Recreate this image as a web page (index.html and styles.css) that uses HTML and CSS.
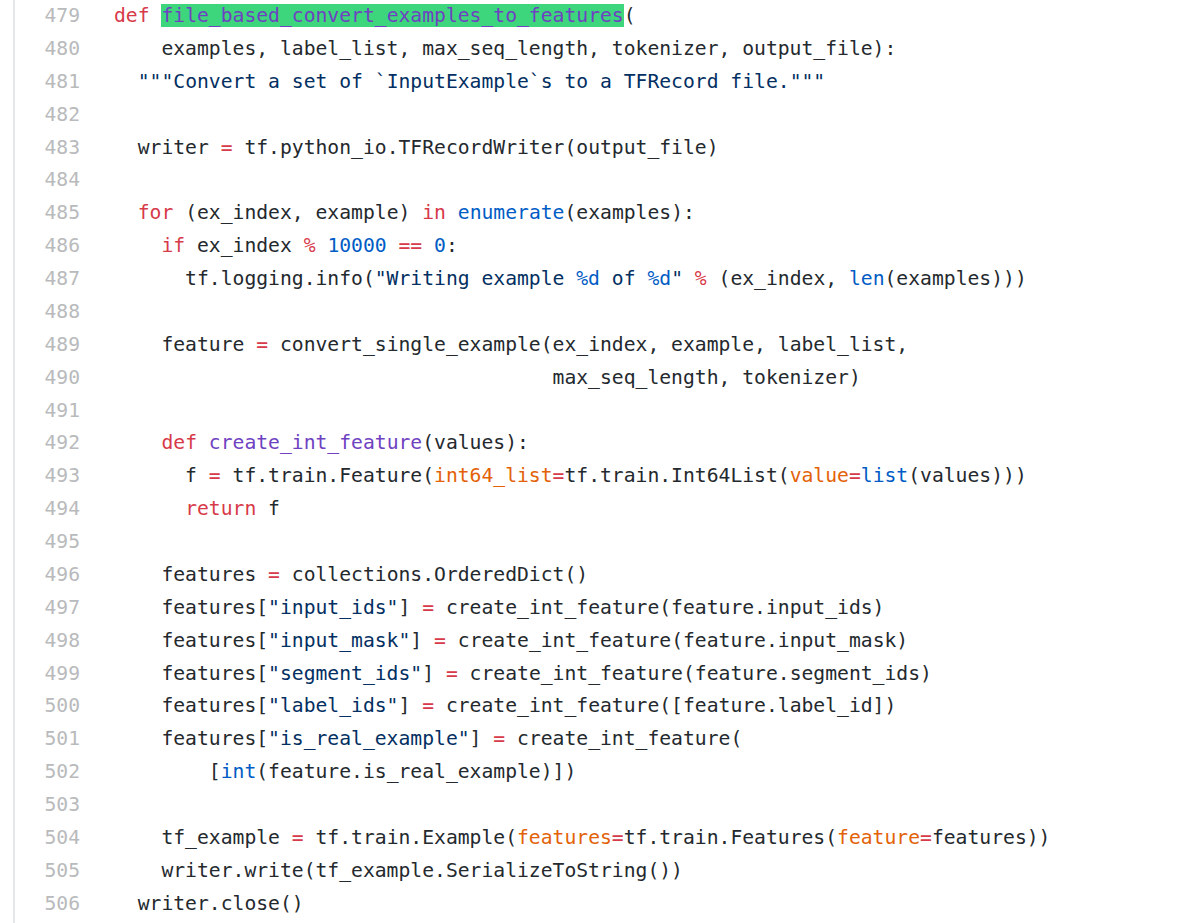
FILE: index.html
```html
<!DOCTYPE html>
<html>
<head>
<meta charset="utf-8">
<link rel="stylesheet" href="styles.css">
</head>
<body>
<div class="blob">
<div class="row"><span class="num">479</span><span class="code"><span class="k">def</span> <span class="en hl">file_based_convert_examples_to_features</span>(</span></div>
<div class="row"><span class="num">480</span><span class="code">    examples, label_list, max_seq_length, tokenizer, output_file):</span></div>
<div class="row"><span class="num">481</span><span class="code">  <span class="s">"""Convert a set of `InputExample`s to a TFRecord file."""</span></span></div>
<div class="row"><span class="num">482</span><span class="code"></span></div>
<div class="row"><span class="num">483</span><span class="code">  writer <span class="k">=</span> tf.python_io.TFRecordWriter(output_file)</span></div>
<div class="row"><span class="num">484</span><span class="code"></span></div>
<div class="row"><span class="num">485</span><span class="code">  <span class="k">for</span> (ex_index, example) <span class="k">in</span> <span class="c1">enumerate</span>(examples):</span></div>
<div class="row"><span class="num">486</span><span class="code">    <span class="k">if</span> ex_index <span class="k">%</span> <span class="c1">10000</span> <span class="k">==</span> <span class="c1">0</span>:</span></div>
<div class="row"><span class="num">487</span><span class="code">      tf.logging.info(<span class="s">"Writing example <span class="c1">%d</span> of <span class="c1">%d</span>"</span> <span class="k">%</span> (ex_index, <span class="c1">len</span>(examples)))</span></div>
<div class="row"><span class="num">488</span><span class="code"></span></div>
<div class="row"><span class="num">489</span><span class="code">    feature <span class="k">=</span> convert_single_example(ex_index, example, label_list,</span></div>
<div class="row"><span class="num">490</span><span class="code">                                     max_seq_length, tokenizer)</span></div>
<div class="row"><span class="num">491</span><span class="code"></span></div>
<div class="row"><span class="num">492</span><span class="code">    <span class="k">def</span> <span class="en">create_int_feature</span>(values):</span></div>
<div class="row"><span class="num">493</span><span class="code">      f <span class="k">=</span> tf.train.Feature(<span class="v">int64_list</span><span class="k">=</span>tf.train.Int64List(<span class="v">value</span><span class="k">=</span><span class="c1">list</span>(values)))</span></div>
<div class="row"><span class="num">494</span><span class="code">      <span class="k">return</span> f</span></div>
<div class="row"><span class="num">495</span><span class="code"></span></div>
<div class="row"><span class="num">496</span><span class="code">    features <span class="k">=</span> collections.OrderedDict()</span></div>
<div class="row"><span class="num">497</span><span class="code">    features[<span class="s">"input_ids"</span>] <span class="k">=</span> create_int_feature(feature.input_ids)</span></div>
<div class="row"><span class="num">498</span><span class="code">    features[<span class="s">"input_mask"</span>] <span class="k">=</span> create_int_feature(feature.input_mask)</span></div>
<div class="row"><span class="num">499</span><span class="code">    features[<span class="s">"segment_ids"</span>] <span class="k">=</span> create_int_feature(feature.segment_ids)</span></div>
<div class="row"><span class="num">500</span><span class="code">    features[<span class="s">"label_ids"</span>] <span class="k">=</span> create_int_feature([feature.label_id])</span></div>
<div class="row"><span class="num">501</span><span class="code">    features[<span class="s">"is_real_example"</span>] <span class="k">=</span> create_int_feature(</span></div>
<div class="row"><span class="num">502</span><span class="code">        [<span class="c1">int</span>(feature.is_real_example)])</span></div>
<div class="row"><span class="num">503</span><span class="code"></span></div>
<div class="row"><span class="num">504</span><span class="code">    tf_example <span class="k">=</span> tf.train.Example(<span class="v">features</span><span class="k">=</span>tf.train.Features(<span class="v">feature</span><span class="k">=</span>features))</span></div>
<div class="row"><span class="num">505</span><span class="code">    writer.write(tf_example.SerializeToString())</span></div>
<div class="row"><span class="num">506</span><span class="code">  writer.close()</span></div>
</div>
</body>
</html>
```
FILE: styles.css
```css
html, body {
  margin: 0;
  padding: 0;
  background: #ffffff;
}

body {
  height: 923px;
  overflow: hidden;
}

.blob {
  margin-left: 13px;
  padding-bottom: 40px;
  border-left: 2px solid #e4e6e9;
  font-family: "DejaVu Sans Mono", "Liberation Mono", monospace;
  font-size: 19.7px;
  line-height: 32.89px;
  color: #24292e;
}

.row {
  display: flex;
  height: 32.89px;
}

.num {
  flex: 0 0 75px;
  box-sizing: border-box;
  padding-right: 10px;
  text-align: right;
  color: #b9babc;
}

.code {
  padding-left: 24px;
  white-space: pre;
}

.k { color: #d73a49; }
.en { color: #6f42c1; }
.c1 { color: #005cc5; }
.s { color: #032f62; }
.v { color: #e36209; }

.hl {
  background: #3dd67c;
}
```
